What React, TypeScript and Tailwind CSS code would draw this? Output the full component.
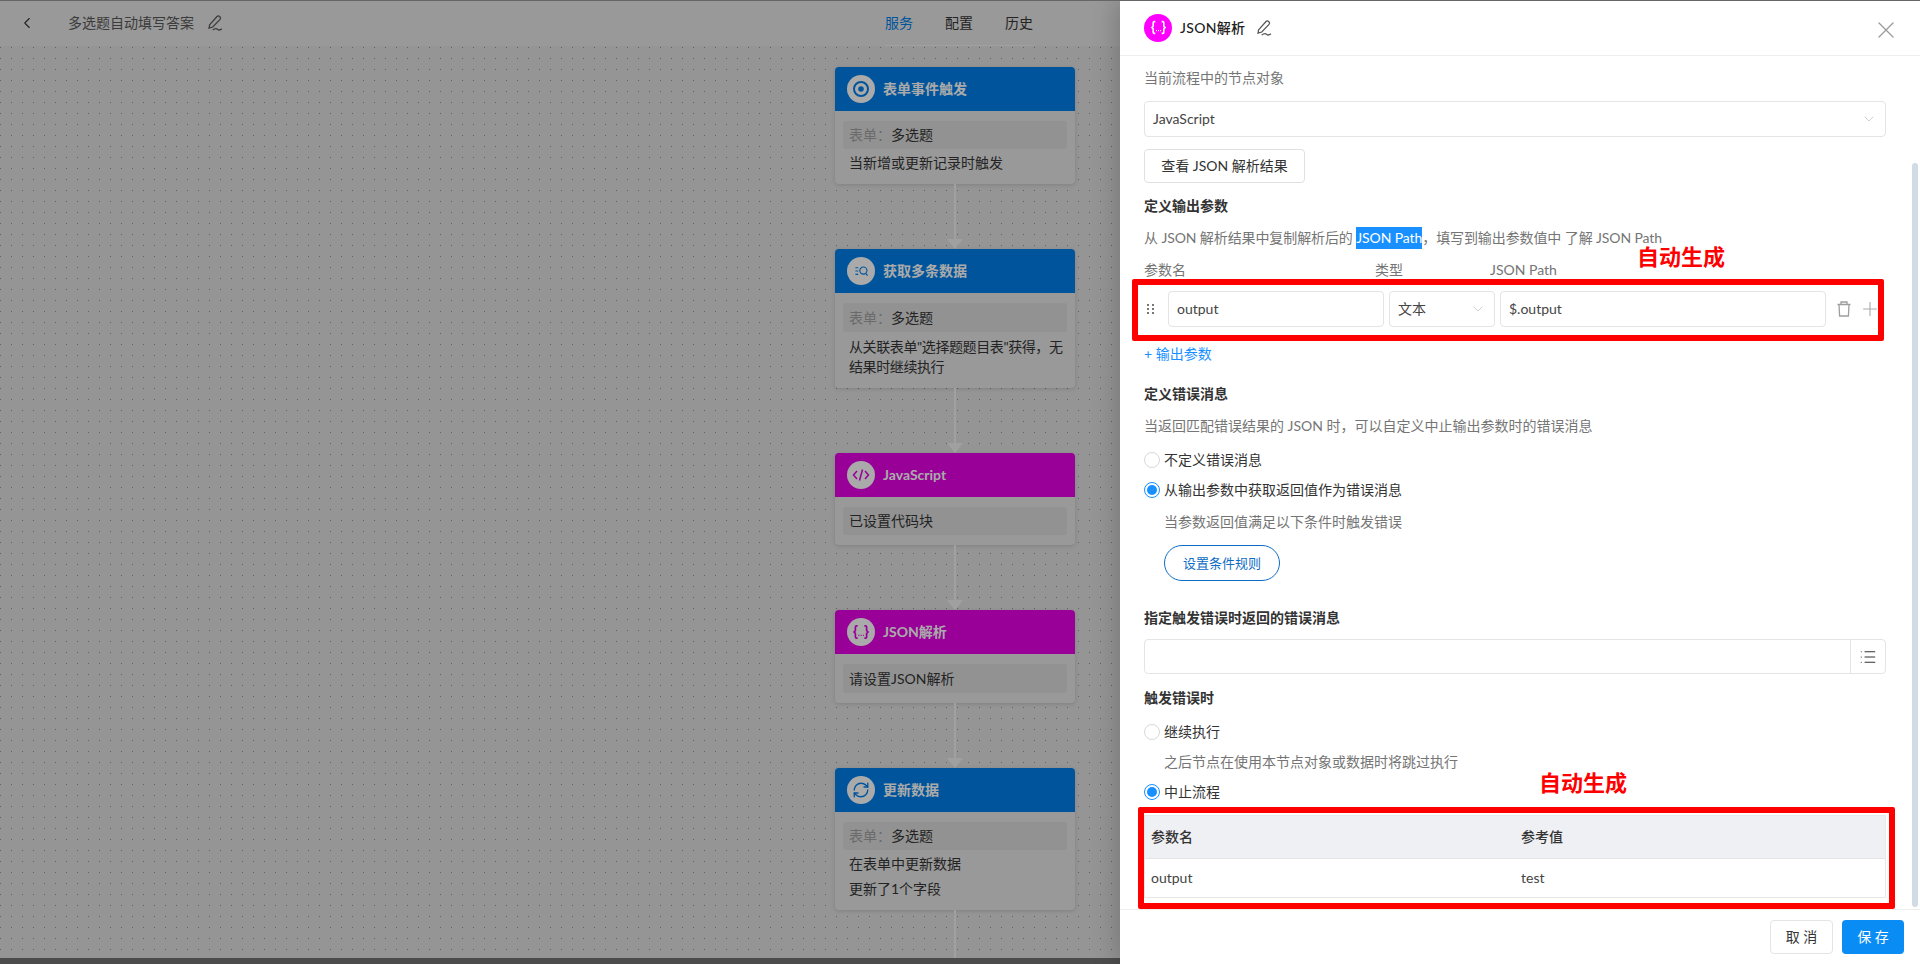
import { FC, ReactNode } from "react";
import { ChevronDown, ChevronLeft, List, Plus, RefreshCw, X } from "lucide-react";

const PenIcon: FC<{ className?: string }> = ({ className }) => (
  <svg className={className} viewBox="0 0 16 16" fill="none" stroke="currentColor" strokeWidth="1.1">
    <path d="M3.2 9.6 9.8 2.2a1.5 1.5 0 0 1 2.2 0l.5.5a1.5 1.5 0 0 1 0 2.1L6 11.6l-3.3 1z" />
    <path d="M6 14.2c2-1.6 3.2-1.6 4.2-.6 1 .9 2.4.8 4-.4" />
  </svg>
);

const BracesIcon: FC<{ className?: string }> = ({ className }) => (
  <svg className={className} viewBox="0 0 16 16" fill="none" stroke="currentColor" strokeWidth="1.5">
    <path d="M5 2.500H4a1 1 0 0 0-1 1V6.800L1.800 8 3 9.200V12.500a1 1 0 0 0 1 1h1" />
    <path d="M11 2.500h1a1 1 0 0 1 1 1V6.800L14.200 8 13 9.200V12.500a1 1 0 0 1-1 1h-1" />
    <path d="M5.600 11h.9M7.600 11h.9M9.600 11h.9" strokeWidth="1.200" />
  </svg>
);

const TargetIcon = () => (
  <svg className="h-[18px] w-[18px] text-[#0079e0]" viewBox="0 0 18 18" fill="none" stroke="currentColor">
    <circle cx="9" cy="9" r="7" strokeWidth="2" />
    <circle cx="9" cy="9" r="2.800" fill="currentColor" stroke="none" />
  </svg>
);

const QueryIcon = () => (
  <svg className="h-[15px] w-[15px] text-[#0079e0]" viewBox="0 0 16 16" fill="none" stroke="currentColor" strokeWidth="1.200">
    <path d="M1.500 4h3M1.500 7.500h3M1.500 11h3" />
    <circle cx="10" cy="7" r="3.800" />
    <path d="m12.500 10 2 2.500" />
  </svg>
);

const CodeIcon = () => (
  <svg className="h-[18px] w-[18px] text-[#da00da]" viewBox="0 0 18 18" fill="none" stroke="currentColor" strokeWidth="1.500">
    <path d="M5 5 1.500 9 5 13M13 5l3.500 4-3.500 4M10.500 3.500l-3 11" />
  </svg>
);

const TrashIcon = () => (
  <svg className="h-[18px] w-[16px] text-[#9e9e9e]" viewBox="0 0 16 18" fill="none" stroke="currentColor" strokeWidth="1.300">
    <path d="M1.500 4.500h13M5 4.500V2h6v2.500M3 4.500l.6 11.500h8.800l.6-11.500" />
  </svg>
);

const Card: FC<{
  icon: ReactNode;
  title: string;
  purple?: boolean;
  bodyClass?: string;
  children: ReactNode;
}> = ({ icon, title, purple, bodyClass, children }) => (
  <div className="w-[240px] overflow-hidden rounded-[4px] bg-[#dbdbdb] shadow-[0_1px_4px_rgba(0,0,0,0.15)]">
    <div className={"flex h-[44px] items-center gap-2 pl-3 " + (purple ? "bg-[#da00da]" : "bg-[#0079e0]")}>
      <span className="flex h-[28px] w-[28px] items-center justify-center rounded-full bg-[#f4f4f4]">{icon}</span>
      <span className="text-sm font-bold text-[#f4f4f4]">{title}</span>
    </div>
    <div className={"px-2 pt-[10px] text-sm text-[#333] " + (bodyClass ?? "pb-[10px]")}>{children}</div>
  </div>
);

const Field: FC<{ tall?: boolean; children: ReactNode }> = ({ tall, children }) => (
  <div className={"flex items-center rounded-[3px] bg-[#d2d2d2] px-[6px] " + (tall ? "h-[29px]" : "h-[28px]")}>{children}</div>
);

const Connector = () => (
  <div className="flex h-[65px] w-[240px] flex-col items-center">
    <div className="w-[2px] flex-1 bg-[#e6e6e6]" />
    <div className="h-0 w-0 border-x-[8px] border-t-[10px] border-x-transparent border-t-[#e6e6e6]" />
  </div>
);

const Radio: FC<{ checked?: boolean; label: string; className?: string }> = ({ checked, label, className }) => (
  <div className={"flex h-[20px] items-center gap-[4px] text-[#333] " + (className ?? "")}>
    <span
      className={
        "flex h-4 w-4 items-center justify-center rounded-full border bg-white " +
        (checked ? "border-[#1890ff]" : "border-[#d9d9d9]")
      }
    >
      {checked ? <span className="h-[10px] w-[10px] rounded-full bg-[#1890ff]" /> : null}
    </span>
    {label}
  </div>
);

const inputClass = "flex h-[36px] items-center rounded-[4px] border border-[#e4e4e4] bg-white px-2 text-[#444]";

export default function App() {
  return (
    <div className="relative h-screen w-full overflow-hidden bg-white font-['Lato','Noto_Sans_CJK_SC',sans-serif] text-sm">
      {/* page behind the drawer */}
      <div className="flex h-full flex-col bg-[#dbdbdb]">
        <div className="flex h-[46px] w-[1120px] flex-none items-center">
          <ChevronLeft className="ml-[18px] h-[18px] w-[18px] text-[#333]" strokeWidth={1.5} />
          <span className="ml-[32px] text-[#555]">多选题自动填写答案</span>
          <PenIcon className="ml-[12px] h-[18px] w-[18px] text-[#555]" />
          <div className="ml-[661px] flex h-full items-center gap-[32px] border-b border-[#e6e6e6]">
            <span className="text-[#0079e0]">服务</span>
            <span className="text-[#333]">配置</span>
            <span className="text-[#333]">历史</span>
          </div>
        </div>
        <div className="flex-1 bg-[#d6d6d6] bg-[radial-gradient(circle,#8c8c8c_0.7px,transparent_0.7px)] bg-[size:11px_11px] bg-[position:-5px_-4px] pl-[835px] pt-[21px]">
          <Card icon={<TargetIcon />} title="表单事件触发" bodyClass="pb-[9px]">
            <Field>
              <span className="text-[#999]">表单：</span>多选题
            </Field>
            <div className="mt-[1px] px-[6px] leading-[25px]">当新增或更新记录时触发</div>
          </Card>
          <Connector />
          <Card icon={<QueryIcon />} title="获取多条数据" bodyClass="pb-[11px]">
            <Field tall>
              <span className="text-[#999]">表单：</span>多选题
            </Field>
            <div className="mt-[5px] whitespace-nowrap px-[6px] leading-[20px] tracking-[-0.4px]">
              从关联表单"选择题题目表"获得，无
              <br />
              结果时继续执行
            </div>
          </Card>
          <Connector />
          <Card icon={<CodeIcon />} title="JavaScript" purple>
            <Field>已设置代码块</Field>
          </Card>
          <Connector />
          <Card icon={<BracesIcon className="h-[18px] w-[18px] text-[#da00da]" />} title="JSON解析" purple>
            <Field tall>请设置JSON解析</Field>
          </Card>
          <Connector />
          <Card
            icon={<RefreshCw className="h-[18px] w-[18px] text-[#0079e0]" strokeWidth={1.8} />}
            title="更新数据"
            bodyClass="pb-[9px]"
          >
            <Field>
              <span className="text-[#999]">表单：</span>多选题
            </Field>
            <div className="mt-[1px] px-[6px] leading-[25px]">在表单中更新数据</div>
            <div className="px-[6px] leading-[25px]">更新了1个字段</div>
          </Card>
          <div className="ml-[119px] h-[60px] w-[2px] bg-[#e6e6e6]" />
        </div>
      </div>

      {/* dark mask */}
      <div className="absolute inset-0 bg-black/30" />
      <div className="absolute bottom-0 left-0 h-[6px] w-full bg-[#4c4c4c]" />

      {/* drawer */}
      <div className="absolute bottom-0 right-0 top-0 flex w-[800px] flex-col bg-white shadow-[-4px_0_24px_rgba(0,0,0,0.2)]">
        <div className="flex h-[56px] flex-none items-center border-b border-[#eee] pl-[24px] pr-[20px]">
          <span className="flex h-[28px] w-[28px] items-center justify-center rounded-full bg-[#ff00ff]">
            <BracesIcon className="h-[17px] w-[17px] text-white" />
          </span>
          <span className="ml-2 font-medium tracking-[0.3px] text-[#222]">JSON解析</span>
          <PenIcon className="ml-[10px] h-[18px] w-[18px] text-[#555]" />
          <X className="ml-auto mt-[4px] h-[28px] w-[28px] text-[#9a9a9a]" strokeWidth={1.1} />
        </div>

        <div className="flex-1 overflow-hidden pl-[24px] pr-[34px]">
          <div className="mt-[12px] h-[20px] leading-[20px] text-[#757575]">当前流程中的节点对象</div>
          <div className={inputClass + " mt-[13px] justify-between"}>
            JavaScript
            <ChevronDown className="h-4 w-4 text-[#c8c8c8]" strokeWidth={1.3} />
          </div>
          <button className="mt-[12px] block h-[34px] w-[161px] rounded-[4px] border border-[#e0e0e0] text-[#333]">
            查看 JSON 解析结果
          </button>
          <div className="mt-[13px] h-[20px] font-bold leading-[20px] text-[#333]">定义输出参数</div>
          <div className="mt-[11px] flex h-[22px] items-center tracking-[-0.1px] text-[#757575]">
            从 JSON 解析结果中复制解析后的&nbsp;
            <span className="bg-[#1890ff] leading-[22px] text-white">JSON Path</span>
            ，填写到输出参数值中 了解 JSON Path
          </div>
          <div className="mt-[11px] flex h-[20px] items-center text-[#757575]">
            <span className="w-[231px]">参数名</span>
            <span className="w-[115px]">类型</span>
            <span>JSON Path</span>
          </div>
          <div className="mt-[11px] flex items-center">
            <span className="grid w-[24px] grid-cols-[3px_3px] justify-center gap-[2px] pr-[10px]">
              {[0, 1, 2, 3, 4, 5].map((i) => (
                <span key={i} className="h-[2px] w-[2px] bg-[#777]" />
              ))}
            </span>
            <div className={inputClass + " w-[216px]"}>output</div>
            <div className={inputClass + " ml-[5px] w-[106px] justify-between"}>
              文本
              <ChevronDown className="h-4 w-4 text-[#c8c8c8]" strokeWidth={1.3} />
            </div>
            <div className={inputClass + " ml-[5px] w-[326px]"}>$.output</div>
            <span className="ml-[10px]">
              <TrashIcon />
            </span>
            <Plus className="ml-[7px] h-[22px] w-[22px] text-[#aaa]" strokeWidth={1.2} />
          </div>
          <div className="mt-[17px] h-[20px] leading-[20px] text-[#1890ff]">+&nbsp;输出参数</div>
          <div className="mt-[20px] h-[20px] font-bold leading-[20px] text-[#333]">定义错误消息</div>
          <div className="mt-[12px] h-[20px] leading-[20px] text-[#757575]">
            当返回匹配错误结果的 JSON 时，可以自定义中止输出参数时的错误消息
          </div>
          <Radio label="不定义错误消息" className="mt-[14px]" />
          <Radio checked label="从输出参数中获取返回值作为错误消息" className="mt-[10px]" />
          <div className="ml-[20px] mt-[12px] h-[20px] leading-[20px] text-[#757575]">当参数返回值满足以下条件时触发错误</div>
          <button className="ml-[20px] mt-[13px] block h-[36px] w-[116px] rounded-full border border-[#0e6cc4] text-[13px] text-[#0e6cc4]">
            设置条件规则
          </button>
          <div className="mt-[27px] h-[20px] font-bold leading-[20px] text-[#333]">指定触发错误时返回的错误消息</div>
          <div className="mt-[11px] flex h-[35px] rounded-[4px] border border-[#e4e4e4]">
            <div className="flex-1" />
            <div className="flex w-[35px] items-center justify-center border-l border-[#e4e4e4]">
              <List className="h-[18px] w-[18px] text-[#333]" strokeWidth={1.5} />
            </div>
          </div>
          <div className="mt-[14px] h-[20px] font-bold leading-[20px] text-[#333]">触发错误时</div>
          <Radio label="继续执行" className="mt-[14px]" />
          <div className="ml-[20px] mt-[10px] h-[20px] leading-[20px] text-[#757575]">之后节点在使用本节点对象或数据时将跳过执行</div>
          <Radio checked label="中止流程" className="mt-[10px]" />
          <div className="mt-[13px] border border-[#e8e8e8]">
            <div className="flex h-[42px] items-center bg-[#eff0f4] font-medium text-[#333]">
              <span className="w-[370px] pl-[6px]">参数名</span>
              <span className="pl-[6px]">参考值</span>
            </div>
            <div className="flex h-[39px] items-center border-t border-[#e4e4e4] text-[#444]">
              <span className="w-[370px] pl-[6px]">output</span>
              <span className="pl-[6px]">test</span>
            </div>
          </div>
        </div>

        <div className="flex h-[55px] flex-none items-center justify-end gap-[9px] border-t border-[#eee] pr-[16px]">
          <button className="h-[34px] w-[63px] rounded-[4px] border border-[#e4e4e4] text-[#333]">取 消</button>
          <button className="h-[34px] w-[62px] rounded-[4px] bg-[#0a8cf5] text-white">保 存</button>
        </div>

        {/* scrollbar */}
        <div className="absolute right-[2px] top-[163px] h-[744px] w-[6px] rounded-full bg-[#d0dbe6]" />

        {/* annotations */}
        <div className="absolute left-[12px] top-[279px] h-[62px] w-[752px] rounded-[2px] border-[6px] border-[#ff0000]" />
        <div className="absolute left-[517px] top-[242px] text-[22px] font-bold leading-[30px] text-[#ff0000]">自动生成</div>
        <div className="absolute left-[18px] top-[807px] h-[102px] w-[757px] rounded-[2px] border-[6px] border-[#ff0000]" />
        <div className="absolute left-[419px] top-[768px] text-[22px] font-bold leading-[30px] text-[#ff0000]">自动生成</div>
      </div>

      <div className="absolute left-0 top-0 h-[1px] w-full bg-[#666]" />
    </div>
  );
}
